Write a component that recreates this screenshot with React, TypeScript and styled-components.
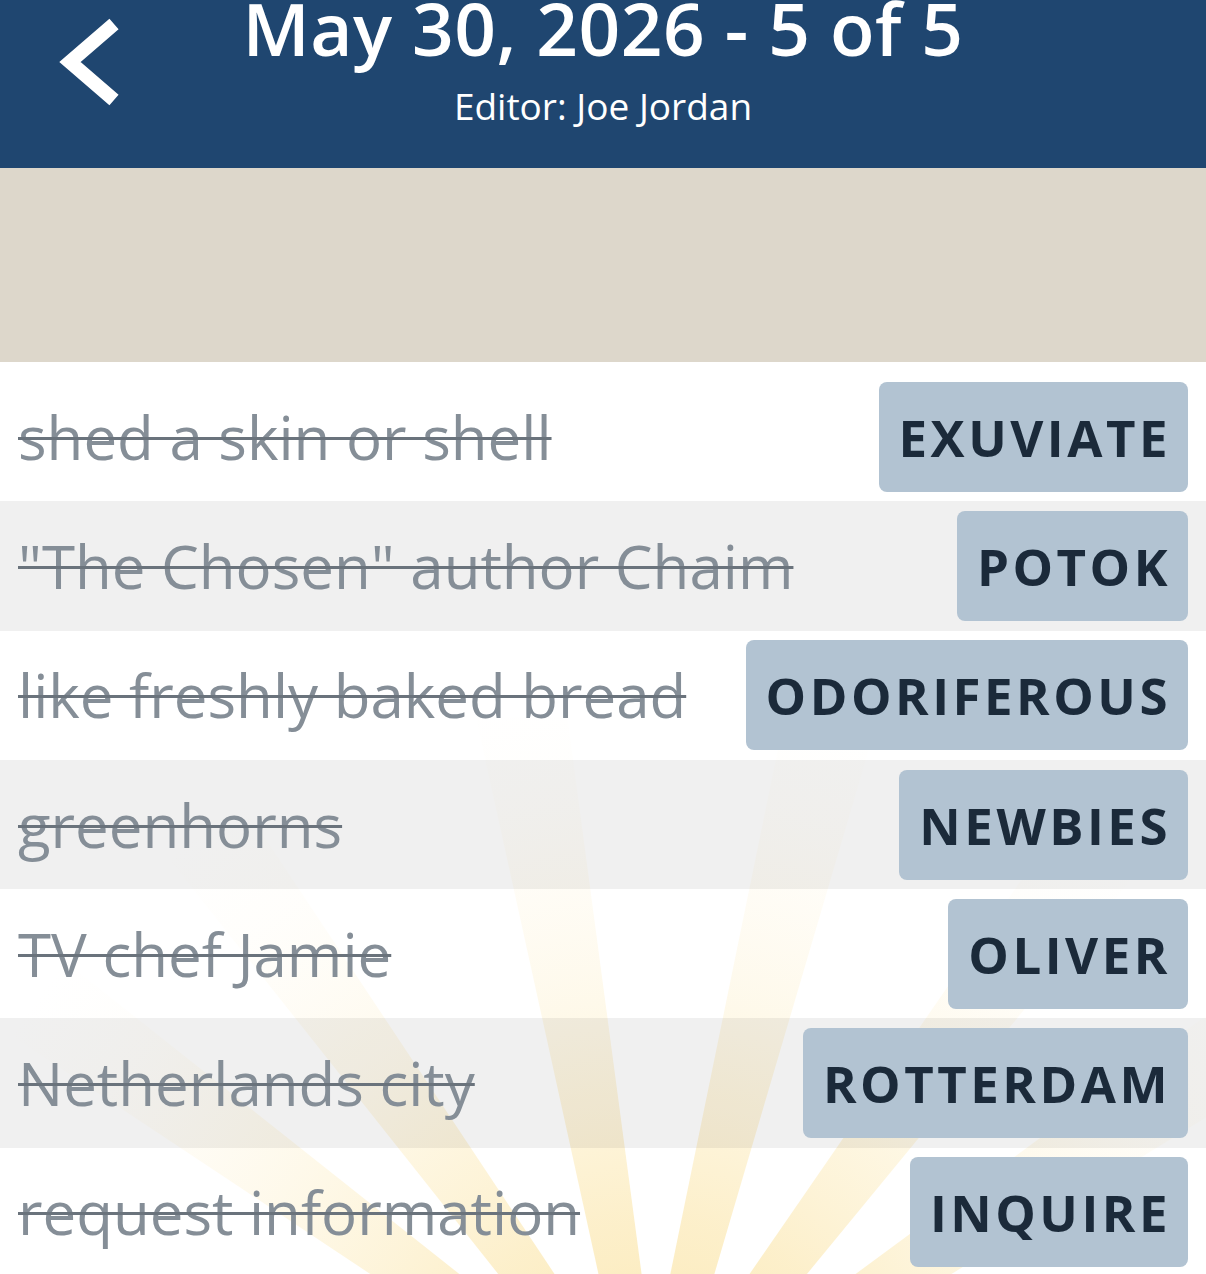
import React from "react";
import styled, { createGlobalStyle } from "styled-components";

const GlobalStyle = createGlobalStyle`
  html, body {
    margin: 0;
    padding: 0;
    background: #fff;
  }
  body {
    font-family: "Open Sans", Lato, sans-serif;
  }
`;

const Page = styled.div`
  width: 1206px;
  min-height: 1274px;
  display: flex;
  flex-direction: column;
  background: #fff;
  overflow: hidden;
`;

const Header = styled.header`
  height: 168px;
  background: #1f4670;
  display: grid;
  grid-template-columns: 1fr auto 1fr;
  align-items: start;
  color: #fff;
`;

const BackButton = styled.button`
  border: none;
  background: transparent;
  padding: 0;
  margin: 14px 0 0 52px;
  width: 80px;
  height: 96px;
  cursor: pointer;
  justify-self: start;
`;

const TitleBlock = styled.div`
  display: flex;
  flex-direction: column;
  align-items: center;
`;

const Title = styled.h1`
  margin: 0;
  font-size: 73px;
  line-height: 56px;
  font-weight: 600;
  letter-spacing: 0.5px;
  white-space: nowrap;
`;

const Subtitle = styled.div`
  margin-top: 30px;
  font-size: 37px;
  line-height: 40px;
  font-weight: 400;
`;

const Banner = styled.div`
  height: 194px;
  background: #ddd7cb;
`;

const ClueList = styled.ul`
  position: relative;
  list-style: none;
  margin: 0;
  padding: 10px 0 0;
  flex: 1;
`;

const Sunburst = styled.svg`
  position: absolute;
  left: 0;
  bottom: 0;
  width: 1206px;
  height: 560px;
  pointer-events: none;
  z-index: 0;
`;

const Row = styled.li<{ $shaded: boolean }>`
  position: relative;
  z-index: 1;
  height: 129.3px;
  box-sizing: border-box;
  display: flex;
  align-items: center;
  justify-content: space-between;
  padding: 0 18px;
  background: ${({ $shaded }) => ($shaded ? "rgba(0, 0, 0, 0.058)" : "transparent")};
`;

const Clue = styled.span`
  font-size: 60px;
  color: #858e97;
  text-decoration: line-through;
  text-decoration-color: #6a737c;
  text-decoration-thickness: 2.5px;
  white-space: nowrap;
`;

const Answer = styled.button`
  height: 110px;
  padding: 0 17px 0 20px;
  border: none;
  border-radius: 8px;
  background: #b2c3d2;
  color: #1b2a3a;
  font-family: inherit;
  font-size: 51px;
  font-weight: 700;
  letter-spacing: 3.5px;
  white-space: nowrap;
  cursor: pointer;
`;

const clues = [
  { clue: "shed a skin or shell", answer: "EXUVIATE" },
  { clue: "\"The Chosen\" author Chaim", answer: "POTOK" },
  { clue: "like freshly baked bread", answer: "ODORIFEROUS" },
  { clue: "greenhorns", answer: "NEWBIES" },
  { clue: "TV chef Jamie", answer: "OLIVER" },
  { clue: "Netherlands city", answer: "ROTTERDAM" },
  { clue: "request information", answer: "INQUIRE" },
];

// soft rays fanning up from a point below the last row (degrees from vertical)
const rays = [-54, -36, -10, 14, 37, 56];

const SunRays = () => {
  const cx = 650;
  const cy = 726; // 166px below the bottom edge of the 560px box
  const r = 760;
  const nearHalf = 14;
  const farHalf = 46;
  return (
    <Sunburst viewBox="0 0 1206 560">
      <defs>
        <radialGradient id="rayFade" cx={cx} cy={cy} r={r} gradientUnits="userSpaceOnUse">
          <stop offset="0" stopColor="#f8d673" stopOpacity="0.6" />
          <stop offset="0.3" stopColor="#f9da83" stopOpacity="0.42" />
          <stop offset="0.6" stopColor="#fbe39e" stopOpacity="0.2" />
          <stop offset="0.85" stopColor="#fdecc0" stopOpacity="0.06" />
          <stop offset="1" stopColor="#fdf0c8" stopOpacity="0" />
        </radialGradient>
      </defs>
      {rays.map((deg) => {
        const a = (deg * Math.PI) / 180;
        const dx = Math.sin(a);
        const dy = -Math.cos(a);
        const px = -dy;
        const py = dx;
        const fx = cx + dx * r;
        const fy = cy + dy * r;
        const pts = [
          [cx + px * nearHalf, cy + py * nearHalf],
          [fx + px * farHalf, fy + py * farHalf],
          [fx - px * farHalf, fy - py * farHalf],
          [cx - px * nearHalf, cy - py * nearHalf],
        ]
          .map(([x, y]) => `${x.toFixed(1)},${y.toFixed(1)}`)
          .join(" ");
        return <polygon key={deg} points={pts} fill="url(#rayFade)" />;
      })}
    </Sunburst>
  );
};

const ChevronLeft = () => (
  <svg width="80" height="96" viewBox="0 0 80 96">
    <polyline points="62,10 18,48 62,86" fill="none" stroke="#fff" strokeWidth="14" strokeLinejoin="miter" />
  </svg>
);

export default function App() {
  return (
    <>
      <GlobalStyle />
      <Page>
        <Header>
          <BackButton aria-label="Back">
            <ChevronLeft />
          </BackButton>
          <TitleBlock>
            <Title>May 30, 2026 - 5 of 5</Title>
            <Subtitle>Editor: Joe Jordan</Subtitle>
          </TitleBlock>
          <div />
        </Header>
        <Banner />
        <ClueList>
          <SunRays />
          {clues.map((item, i) => (
            <Row key={item.answer} $shaded={i % 2 === 1}>
              <Clue>{item.clue}</Clue>
              <Answer>{item.answer}</Answer>
            </Row>
          ))}
        </ClueList>
      </Page>
    </>
  );
}
